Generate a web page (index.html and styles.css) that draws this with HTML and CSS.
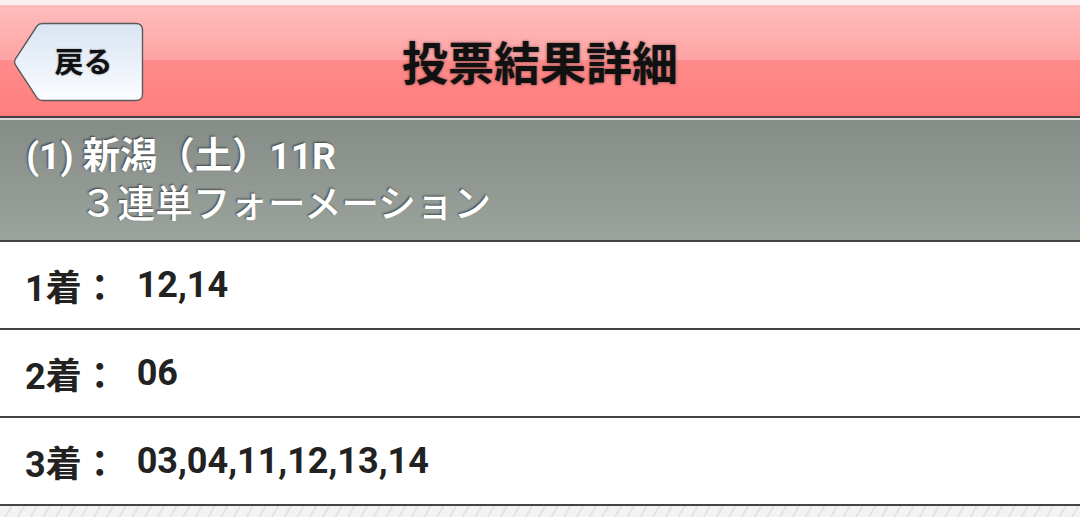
FILE: index.html
```html
<!DOCTYPE html>
<html lang="ja">
<head>
<meta charset="utf-8">
<title>投票結果詳細</title>
<link rel="stylesheet" href="styles.css">
</head>
<body>
<header class="topbar">
  <button class="back" type="button">
    <svg class="back-shape" viewBox="0 0 131 80" width="131" height="80" aria-hidden="true">
      <defs>
        <linearGradient id="bg" x1="0" y1="0" x2="0" y2="1">
          <stop offset="0" stop-color="#d9e4f2"/>
          <stop offset="1" stop-color="#fbfdff"/>
        </linearGradient>
      </defs>
      <path d="M29 1.5 Q26 1.5 24 4 L2.3 37 Q0.8 39.8 2.3 42.6 L24 75.8 Q26 78.5 29 78.5 H123 Q129.5 78.5 129.5 72 V8 Q129.5 1.5 123 1.5 Z" fill="url(#bg)" stroke="#5a5a5a" stroke-width="1.4"/>
    </svg>
    <span class="back-label">戻る</span>
  </button>
  <h1 class="title">投票結果詳細</h1>
  <div class="spacer"></div>
</header>

<section class="race">
  <div class="race-line1">(1) 新潟（土）11R</div>
  <div class="race-line2">３連単フォーメーション</div>
</section>

<ul class="picks">
  <li class="pick"><span class="pick-label">1着：</span><span class="pick-nums">12,14</span></li>
  <li class="pick"><span class="pick-label">2着：</span><span class="pick-nums">06</span></li>
  <li class="pick"><span class="pick-label">3着：</span><span class="pick-nums">03,04,11,12,13,14</span></li>
</ul>
</body>
</html>
```

FILE: styles.css
```css
html, body {
  margin: 0;
  padding: 0;
}

body {
  font-family: "Roboto", "Noto Sans CJK JP", sans-serif;
  background-color: #ececec;
  background-image: repeating-linear-gradient(120deg, #f3f3f3 0px, #f3f3f3 9px, #e3e3e3 9px, #e3e3e3 11px);
  min-height: 517px;
}

.topbar {
  display: grid;
  grid-template-columns: 1fr auto 1fr;
  align-items: center;
  height: 111px;
  border-top: 5px solid #faf0f0;
  border-bottom: 2px solid #4a3e3e;
  background: linear-gradient(to bottom, #ffbdbd 0%, #ffa3a3 50%, #ff8b8b 50%, #ff7e7e 100%);
}

.back {
  justify-self: start;
  position: relative;
  margin: 3px 0 0 13px;
  width: 131px;
  height: 80px;
  padding: 0 0 5px 10px;
  border: 0;
  background: transparent;
  font-family: "Noto Sans CJK JP", sans-serif;
  font-weight: 700;
  font-size: 29px;
  color: #111;
  text-shadow: 0 0 2px rgba(0, 0, 0, 0.45);
  display: flex;
  align-items: center;
  justify-content: center;
  cursor: pointer;
}

.back-shape {
  position: absolute;
  left: 0;
  top: 0;
}

.back-label {
  position: relative;
}

.title {
  margin: 0;
  font-family: "Noto Sans CJK JP", sans-serif;
  font-weight: 700;
  font-size: 46px;
  line-height: 1;
  color: #111;
  text-shadow: 0 0 3px rgba(0, 0, 0, 0.5);
  padding-bottom: 2px;
}

.race {
  border-top: 2px solid #d6dbd6;
  border-bottom: 2px solid #444;
  height: 96px;
  padding: 12px 0 12px 26px;
  background: linear-gradient(to bottom, #868c87 0%, #9ba39d 100%);
  color: #fff;
  font-family: "Roboto", "Noto Sans CJK JP", sans-serif;
  font-size: 37.3px;
  line-height: 48px;
  text-shadow: -1px -1px 2px rgba(0, 0, 0, 0.55);
}

.race-line1 {
  font-weight: 700;
}

.race-line2 {
  font-size: 37.6px;
  font-weight: 500;
  padding-left: 54px;
}

.picks {
  list-style: none;
  margin: 0;
  padding: 0;
}

.pick {
  display: flex;
  align-items: center;
  height: 86px;
  padding-left: 25px;
  background: #fff;
  border-bottom: 2px solid #444;
  color: #222;
  font-weight: 700;
  font-size: 36px;
}

.pick-label {
  margin-right: 19px;
}
```
